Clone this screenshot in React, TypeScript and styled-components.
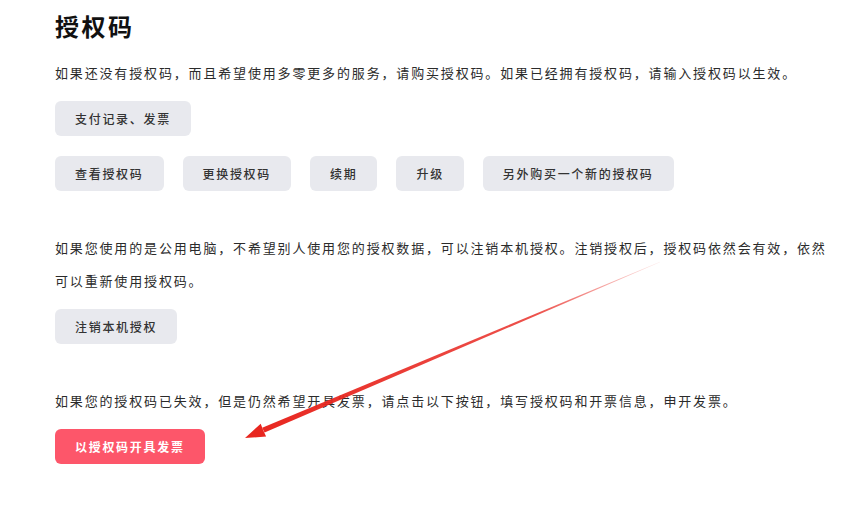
import React from 'react'
import styled, { createGlobalStyle } from 'styled-components'

const GlobalStyle = createGlobalStyle`
  html, body {
    margin: 0;
    padding: 0;
    background: #fff;
  }
  body {
    font-family: "Noto Sans CJK SC", "Noto Sans", sans-serif;
    color: #333;
  }
`

const Page = styled.div`
  position: relative;
  width: 846px;
  height: 506px;
  box-sizing: border-box;
  padding: 10px 15px 0 55px;
  overflow: hidden;
`

const Title = styled.h2`
  margin: 0 0 14px;
  font-size: 24px;
  line-height: 32px;
  font-weight: 700;
  letter-spacing: 2.5px;
  color: #111;
`

const Section = styled.section`
  display: flex;
  flex-direction: column;
  align-items: flex-start;
  & + & {
    margin-top: 40px;
  }
`

const Text = styled.p`
  margin: 0 0 12px;
  font-size: 13px;
  line-height: 33px;
  letter-spacing: 1.84px;
  color: #2b2b2b;
`

const ButtonRow = styled.div`
  display: flex;
  gap: 19px;
  & + & {
    margin-top: 20px;
  }
`

const Button = styled.button<{ $primary?: boolean }>`
  height: 35px;
  padding: 0 20px;
  border: none;
  border-radius: 6px;
  font-family: "Noto Sans CJK SC", "Noto Sans", sans-serif;
  font-size: 12px;
  letter-spacing: 1.7px;
  font-weight: ${p => (p.$primary ? 700 : 500)};
  color: ${p => (p.$primary ? '#fff' : '#333')};
  background: ${p => (p.$primary ? '#fd566a' : '#e8e9ee')};
  cursor: pointer;
`

const Overlay = styled.svg`
  position: absolute;
  left: 0;
  top: 0;
  pointer-events: none;
`

// red annotation arrow drawn over the page
function Arrow() {
  return (
    <Overlay width="846" height="506" viewBox="0 0 846 506">
      <defs>
        <linearGradient id="arrowFade" x1="660" y1="262" x2="250" y2="436" gradientUnits="userSpaceOnUse">
          <stop offset="0" stopColor="#e8261f" stopOpacity="0.1" />
          <stop offset="0.3" stopColor="#e8261f" stopOpacity="0.8" />
          <stop offset="1" stopColor="#e8261f" stopOpacity="1" />
        </linearGradient>
      </defs>
      <polygon points="264.6,432.6 262.2,427.8 660.1,261.8 659.9,262.2" fill="url(#arrowFade)" />
      <polygon points="245,438 260.7,423.8 263.2,430.2 266.1,436.6" fill="#e8261f" />
    </Overlay>
  )
}

export default function App() {
  return (
    <Page>
      <GlobalStyle />
      <Title>授权码</Title>
      <Section>
        <Text>如果还没有授权码，而且希望使用多零更多的服务，请购买授权码。如果已经拥有授权码，请输入授权码以生效。</Text>
        <ButtonRow>
          <Button>支付记录、发票</Button>
        </ButtonRow>
        <ButtonRow>
          <Button>查看授权码</Button>
          <Button>更换授权码</Button>
          <Button>续期</Button>
          <Button>升级</Button>
          <Button>另外购买一个新的授权码</Button>
        </ButtonRow>
      </Section>
      <Section>
        <Text>如果您使用的是公用电脑，不希望别人使用您的授权数据，可以注销本机授权。注销授权后，授权码依然会有效，依然可以重新使用授权码。</Text>
        <Button>注销本机授权</Button>
      </Section>
      <Section>
        <Text>如果您的授权码已失效，但是仍然希望开具发票，请点击以下按钮，填写授权码和开票信息，申开发票。</Text>
        <Button $primary>以授权码开具发票</Button>
      </Section>
      <Arrow />
    </Page>
  )
}
